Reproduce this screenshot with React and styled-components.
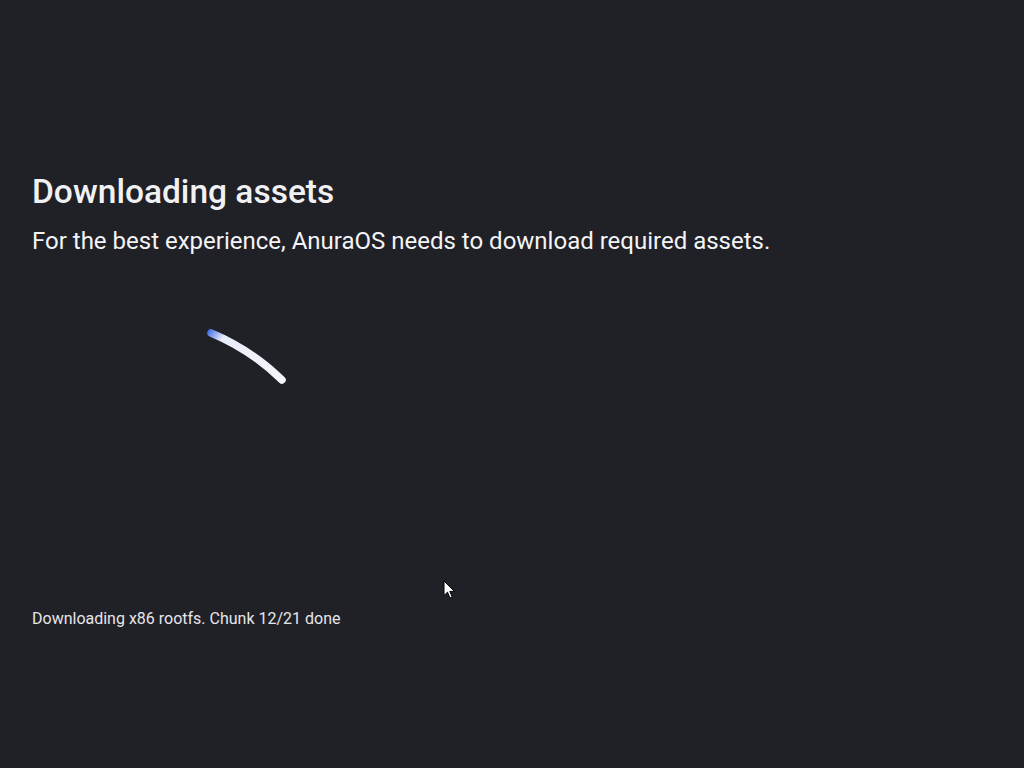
import React from "react";
import styled, { createGlobalStyle } from "styled-components";

const Global = createGlobalStyle`
  html, body { margin: 0; padding: 0; background: #202027; }
  body { font-family: Roboto, "Noto Sans", "Liberation Sans", sans-serif; }
`;

const Screen = styled.main`
  position: relative;
  width: 1024px;
  height: 768px;
  box-sizing: border-box;
  padding: 173px 32px 0 32px;
  background: #202027;
  color: #f2f2f4;
  display: flex;
  flex-direction: column;
  overflow: hidden;
`;

const Title = styled.h1`
  margin: 0;
  font-size: 33.5px;
  line-height: 38px;
  font-weight: 500;
  color: #f1f1f3;
`;

const Subtitle = styled.p`
  margin: 16px 0 0 0;
  font-size: 24px;
  line-height: 28px;
  font-weight: 400;
  color: #f4f4f6;
`;

const SpinnerArea = styled.div`
  height: 354px;
  display: flex;
`;

const Status = styled.p`
  margin: 0;
  font-size: 16px;
  line-height: 19px;
  color: #e6e6ea;
`;

const Cursor = styled.svg`
  position: absolute;
  left: 443px;
  top: 580px;
`;

function Spinner() {
  return (
    <svg width="320" height="354" viewBox="0 0 320 354" aria-hidden="true">
      <defs>
        <linearGradient id="arcGrad" gradientUnits="userSpaceOnUse" x1="176" y1="76" x2="252" y2="127">
          <stop offset="0" stopColor="#3f6fe4" />
          <stop offset="0.08" stopColor="#8fa9ee" />
          <stop offset="0.18" stopColor="#e8edfa" />
          <stop offset="1" stopColor="#f4f6fb" />
        </linearGradient>
      </defs>
      <path
        d="M179 78 A 226 226 0 0 1 250 125"
        fill="none"
        stroke="url(#arcGrad)"
        strokeWidth="7.5"
        strokeLinecap="round"
      />
    </svg>
  );
}

export default function App() {
  return (
    <>
      <Global />
      <Screen>
        <Title>Downloading assets</Title>
        <Subtitle>For the best experience, AnuraOS needs to download required assets.</Subtitle>
        <SpinnerArea>
          <Spinner />
        </SpinnerArea>
        <Status>Downloading x86 rootfs. Chunk 12/21 done</Status>
        <Cursor width="14" height="20" viewBox="0 0 14 20" aria-hidden="true">
          <path d="M1 1 L1 15.5 L4.5 12.2 L7 18 L9.2 17 L6.8 11.4 L11.5 11.4 Z" fill="#ffffff" stroke="#000000" strokeWidth="1" strokeLinejoin="round" />
        </Cursor>
      </Screen>
    </>
  );
}
